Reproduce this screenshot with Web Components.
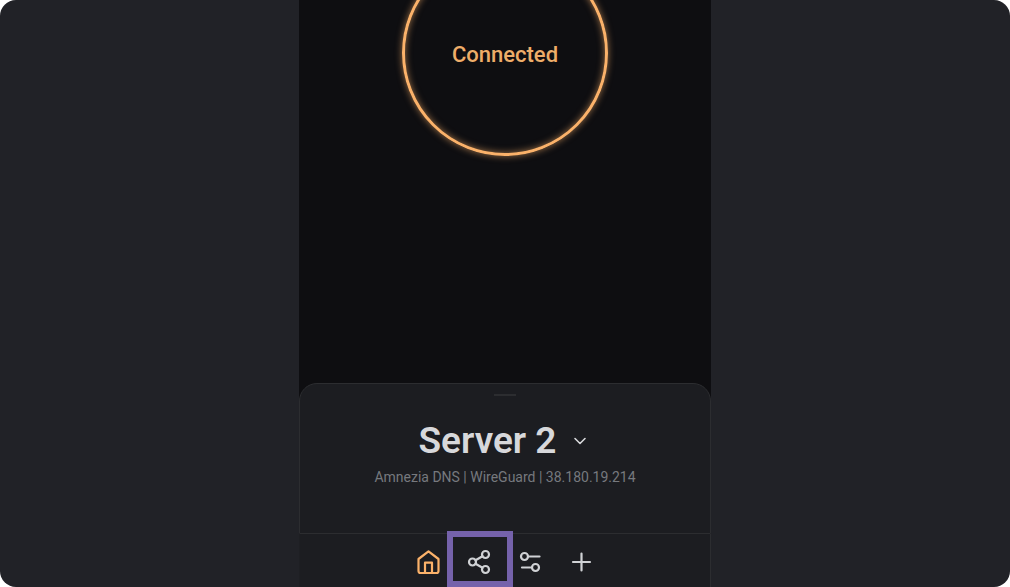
<!DOCTYPE html>
<html lang="en">
<head>
<meta charset="utf-8">
<title>Amnezia VPN</title>
<style>
html, body { margin: 0; height: 100%; background: #fff; }
body { font-family: Roboto, "Liberation Sans", sans-serif; color: #d7d8db; }
</style>
</head>
<body>
<vpn-app>
  <connect-ring slot="stage">Connected</connect-ring>
  <server-sheet slot="sheet">
    <span slot="name">Server 2</span>
    <span slot="details">Amnezia DNS | WireGuard | 38.180.19.214</span>
  </server-sheet>
  <tab-bar slot="tabs">
    <tab-button label="Home" icon="home" active></tab-button>
    <tab-button label="Share" icon="share" highlighted></tab-button>
    <tab-button label="Settings" icon="settings"></tab-button>
    <tab-button label="Add" icon="add"></tab-button>
  </tab-bar>
</vpn-app>
<script>
function define(name, html, setup) {
  const template = document.createElement('template');
  template.innerHTML = html;
  customElements.define(name, class extends HTMLElement {
    constructor() {
      super();
      this.attachShadow({ mode: 'open' }).append(template.content.cloneNode(true));
    }
    connectedCallback() { if (setup) setup(this, this.shadowRoot); }
  });
}

define('vpn-app', `
<style>
:host { display: flex; justify-content: center; height: 100vh; background: #212227; border-radius: 16px; overflow: hidden; }
main { display: flex; flex-direction: column; width: 100%; max-width: 412px; background: #0e0e11; }
.stage { flex: 1; min-height: 0; display: flex; justify-content: center; align-items: flex-start; }
</style>
<main>
  <div class="stage"><slot name="stage"></slot></div>
  <slot name="sheet"></slot>
  <slot name="tabs"></slot>
</main>`);

define('connect-ring', `
<style>
:host { display: block; margin-top: -50px; }
button { display: flex; align-items: center; justify-content: center; box-sizing: border-box; width: 206px; height: 206px; padding: 4px 0 0; border: 3px solid #fbb26a; border-radius: 50%; background: none; box-shadow: 0 0 7px #fbb26a99, inset 0 0 7px #fbb26a99; color: #eead69; font: 500 22px/26px Roboto, sans-serif; }
</style>
<button type="button"><slot></slot></button>`);

define('server-sheet', `
<style>
:host { display: block; background: #0e0e11; }
section { box-sizing: border-box; min-height: 151px; display: flex; flex-direction: column; align-items: center; padding: 10px 16px 0; background: #1c1d21; border: 1px solid #2c2d30; border-radius: 18px 18px 0 0; }
.handle { width: 22px; height: 2px; background: #2c2d30; }
button { display: flex; align-items: center; gap: 16px; margin-top: 22px; padding: 0 5px 0 0; border: 0; background: none; color: #d7d8db; }
h1 { margin: 0; font: 600 37px/46px Roboto, sans-serif; }
p { margin: 4px 0 0; font: 400 14px/18px Roboto, sans-serif; color: #76797e; }
svg { display: block; }
</style>
<section>
  <div class="handle"></div>
  <button type="button" aria-label="Server 2, choose server">
    <h1><slot name="name"></slot></h1>
    <svg width="14" height="14" viewBox="0 0 14 14" fill="none" stroke="currentColor" stroke-width="1.6" stroke-linecap="round" stroke-linejoin="round"><path d="M2 4.5 7 9.5 12 4.5"/></svg>
  </button>
  <p><slot name="details"></slot></p>
</section>`);

define('tab-bar', `
<style>
:host { display: block; }
nav { box-sizing: border-box; height: 53px; display: flex; align-items: flex-end; justify-content: center; background: #1c1d21; border: 0 solid #2c2d30; border-width: 0 1px; border-left-color: #1e1f23; }
</style>
<nav aria-label="Main"><slot></slot></nav>`);

const icons = {
  home: '<path d="M3 22V10L13 2.4 23 10v12a2 2 0 0 1-2 2H5a2 2 0 0 1-2-2z"/><path d="M9.5 23.5V13.7h7v9.8"/>',
  share: '<circle cx="6" cy="13" r="3.5"/><circle cx="19" cy="5.5" r="3.5"/><circle cx="19" cy="20.5" r="3.5"/><path d="M9 11.2 16 7.2M9 14.8l7 4"/>',
  settings: '<circle cx="7" cy="7.5" r="3.5"/><path d="M10.5 7.5h11.5"/><circle cx="18" cy="18.5" r="3.5"/><path d="M4.5 18.5h10"/>',
  add: '<path d="M13 4.5v17M4.5 13h17"/>'
};
define('tab-button', `
<style>
:host { display: block; width: 51px; color: #d0d2d5; }
:host([active]) { color: #fbb26a; }
button { display: flex; align-items: center; justify-content: center; box-sizing: border-box; width: 100%; height: 50px; padding: 0; border: 0; background: none; color: inherit; }
:host([highlighted]) { position: relative; }
:host([highlighted])::after { content: ""; position: absolute; inset: -6px -8px 0 -7px; border: 6px solid #7562ab; pointer-events: none; }
svg { display: block; }
</style>
<button type="button"><svg width="27" height="26" viewBox="-0.5 0 27 26" fill="none" stroke="currentColor" stroke-width="2.2" stroke-linecap="round" stroke-linejoin="round" aria-hidden="true"></svg></button>`,
(host, root) => {
  root.querySelector('button').setAttribute('aria-label', host.getAttribute('label'));
  root.querySelector('svg').innerHTML = icons[host.getAttribute('icon')];
});
</script>
</body>
</html>
